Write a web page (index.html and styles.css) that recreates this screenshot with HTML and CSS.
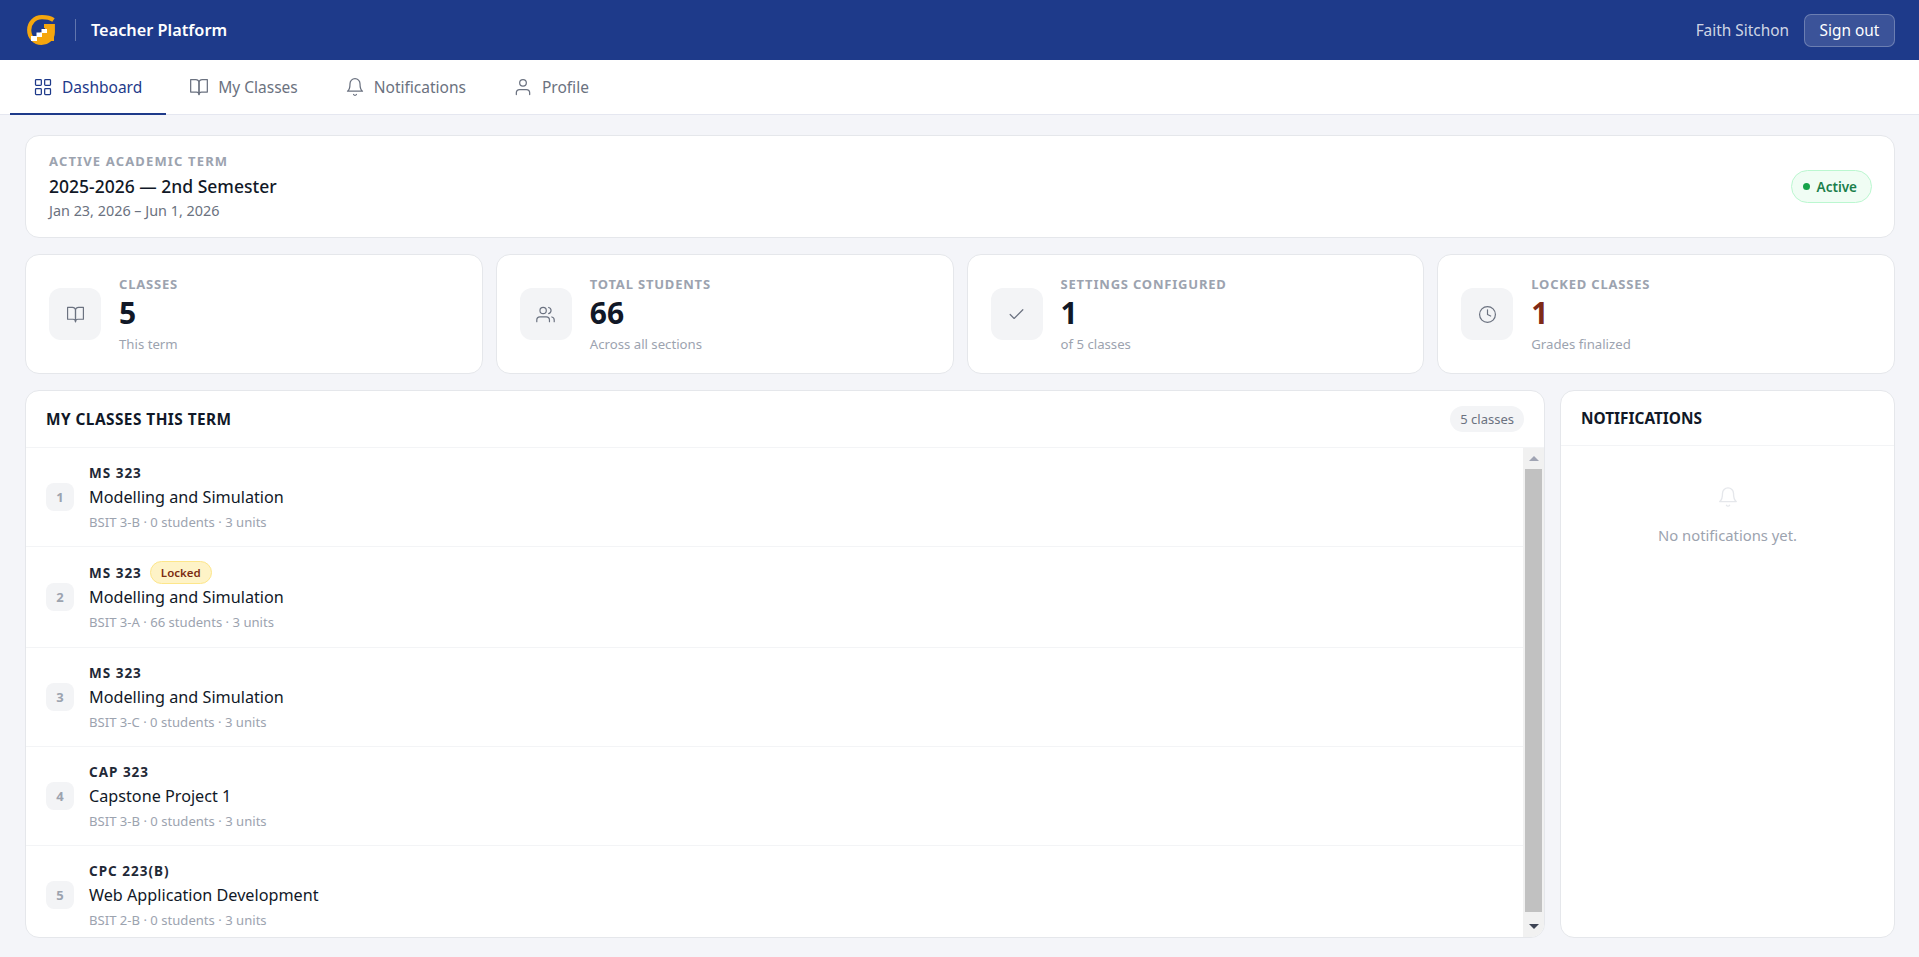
FILE: index.html
```html
<!DOCTYPE html>
<html lang="en">
<head>
  <meta charset="UTF-8">
  <meta name="viewport" content="width=device-width, initial-scale=1.0">
  <title>Teacher Platform</title>
  <link rel="stylesheet" href="styles.css">
</head>
<body>
  <header class="topbar">
    <div class="brand">
      <svg class="logo" viewBox="0 0 28 30" aria-hidden="true">
        <path d="M26.5 5C23.5 3 19.5 2.2 15 2.2C7.5 2.2 2.2 8 2.2 15C2.2 22.6 7.6 27.8 14.4 27.8C21 27.8 25.8 23.5 25.8 17V11H17" fill="none" stroke="#f5a60e" stroke-width="4.2"/>
        <path d="M8 26V21H13V17.5H18V13H27V26z" fill="#f5a60e"/>
        <path d="M4 26V21H9.5V17.5H14.5V14H20V18H15V22H10V26z" fill="#fff"/>
      </svg>
      <span class="brand-divider"></span>
      <span class="brand-name">Teacher Platform</span>
    </div>
    <div class="user-area">
      <span class="user-name">Faith Sitchon</span>
      <button class="signout">Sign out</button>
    </div>
  </header>

  <nav class="tabs">
    <a class="tab active">
      <svg class="icon" viewBox="0 0 24 24"><rect x="3" y="3" width="7" height="7" rx="1"/><rect x="14" y="3" width="7" height="7" rx="1"/><rect x="14" y="14" width="7" height="7" rx="1"/><rect x="3" y="14" width="7" height="7" rx="1"/></svg>
      Dashboard
    </a>
    <a class="tab">
      <svg class="icon" viewBox="0 0 24 24"><path d="M2 3h6a4 4 0 0 1 4 4v14a3 3 0 0 0-3-3H2z"/><path d="M22 3h-6a4 4 0 0 0-4 4v14a3 3 0 0 1 3-3h7z"/></svg>
      My Classes
    </a>
    <a class="tab">
      <svg class="icon" viewBox="0 0 24 24"><path d="M18 8A6 6 0 0 0 6 8c0 7-3 9-3 9h18s-3-2-3-9"/><path d="M13.73 21a2 2 0 0 1-3.46 0"/></svg>
      Notifications
    </a>
    <a class="tab">
      <svg class="icon" viewBox="0 0 24 24"><path d="M20 21v-2a4 4 0 0 0-4-4H8a4 4 0 0 0-4 4v2"/><circle cx="12" cy="7" r="4"/></svg>
      Profile
    </a>
  </nav>

  <main class="content">
    <section class="card term-card">
      <div>
        <div class="term-label">Active Academic Term</div>
        <div class="term-title">2025-2026 — 2nd Semester</div>
        <div class="term-dates">Jan 23, 2026 – Jun 1, 2026</div>
      </div>
      <span class="status-pill"><span class="status-dot"></span>Active</span>
    </section>

    <section class="stats">
      <div class="card stat">
        <div class="stat-icon">
          <svg class="icon" viewBox="0 0 24 24"><path d="M2 3h6a4 4 0 0 1 4 4v14a3 3 0 0 0-3-3H2z"/><path d="M22 3h-6a4 4 0 0 0-4 4v14a3 3 0 0 1 3-3h7z"/></svg>
        </div>
        <div>
          <div class="stat-label">Classes</div>
          <div class="stat-value">5</div>
          <div class="stat-sub">This term</div>
        </div>
      </div>
      <div class="card stat">
        <div class="stat-icon">
          <svg class="icon" viewBox="0 0 24 24"><path d="M17 21v-2a4 4 0 0 0-4-4H5a4 4 0 0 0-4 4v2"/><circle cx="9" cy="7" r="4"/><path d="M23 21v-2a4 4 0 0 0-3-3.87"/><path d="M16 3.13a4 4 0 0 1 0 7.75"/></svg>
        </div>
        <div>
          <div class="stat-label">Total Students</div>
          <div class="stat-value">66</div>
          <div class="stat-sub">Across all sections</div>
        </div>
      </div>
      <div class="card stat">
        <div class="stat-icon">
          <svg class="icon" viewBox="0 0 24 24"><polyline points="20 6 9 17 4 12"/></svg>
        </div>
        <div>
          <div class="stat-label">Settings Configured</div>
          <div class="stat-value">1</div>
          <div class="stat-sub">of 5 classes</div>
        </div>
      </div>
      <div class="card stat">
        <div class="stat-icon">
          <svg class="icon" viewBox="0 0 24 24"><circle cx="12" cy="12" r="10"/><polyline points="12 6 12 12 16 14"/></svg>
        </div>
        <div>
          <div class="stat-label">Locked Classes</div>
          <div class="stat-value locked">1</div>
          <div class="stat-sub">Grades finalized</div>
        </div>
      </div>
    </section>

    <section class="panels">
      <div class="card panel">
        <div class="panel-head classes-head">
          <h2>My Classes This Term</h2>
          <span class="count-pill">5 classes</span>
        </div>
        <div class="list-wrap">
          <div class="class-list">
            <div class="class-row">
              <span class="row-num">1</span>
              <div>
                <div class="class-code">MS 323</div>
                <div class="class-name">Modelling and Simulation</div>
                <div class="class-meta">BSIT 3-B · 0 students · 3 units</div>
              </div>
            </div>
            <div class="class-row tall">
              <span class="row-num">2</span>
              <div>
                <div class="class-code">MS 323 <span class="locked-pill">Locked</span></div>
                <div class="class-name">Modelling and Simulation</div>
                <div class="class-meta">BSIT 3-A · 66 students · 3 units</div>
              </div>
            </div>
            <div class="class-row">
              <span class="row-num">3</span>
              <div>
                <div class="class-code">MS 323</div>
                <div class="class-name">Modelling and Simulation</div>
                <div class="class-meta">BSIT 3-C · 0 students · 3 units</div>
              </div>
            </div>
            <div class="class-row">
              <span class="row-num">4</span>
              <div>
                <div class="class-code">CAP 323</div>
                <div class="class-name">Capstone Project 1</div>
                <div class="class-meta">BSIT 3-B · 0 students · 3 units</div>
              </div>
            </div>
            <div class="class-row">
              <span class="row-num">5</span>
              <div>
                <div class="class-code">CPC 223(B)</div>
                <div class="class-name">Web Application Development</div>
                <div class="class-meta">BSIT 2-B · 0 students · 3 units</div>
              </div>
            </div>
          </div>
          <div class="scrollbar">
            <span class="scroll-btn"><span class="arrow-up"></span></span>
            <span class="scroll-thumb"></span>
            <span class="scroll-btn"><span class="arrow-down"></span></span>
          </div>
        </div>
      </div>

      <div class="card panel">
        <div class="panel-head notif-head">
          <h2>Notifications</h2>
        </div>
        <div class="empty">
          <svg class="icon empty-bell" viewBox="0 0 24 24"><path d="M18 8A6 6 0 0 0 6 8c0 7-3 9-3 9h18s-3-2-3-9"/><path d="M13.73 21a2 2 0 0 1-3.46 0"/></svg>
          <p>No notifications yet.</p>
        </div>
      </div>
    </section>
  </main>
</body>
</html>
```

FILE: styles.css
```css
* {
  box-sizing: border-box;
}

html, body {
  height: 100%;
}

body {
  margin: 0;
  height: 957px;
  display: flex;
  flex-direction: column;
  overflow: hidden;
  font-family: "Noto Sans", "Open Sans", sans-serif;
  background-color: #f4f5f9;
  color: #111827;
}

.icon {
  width: 19px;
  height: 19px;
  flex: none;
  fill: none;
  stroke: currentColor;
  stroke-width: 1.5;
  stroke-linecap: round;
  stroke-linejoin: round;
}

/* top bar */
.topbar {
  height: 60px;
  flex: none;
  display: flex;
  align-items: center;
  justify-content: space-between;
  padding: 0 24px 0 27px;
  background-color: #1e3a8a;
}

.brand {
  display: flex;
  align-items: center;
}

.logo {
  width: 28px;
  height: 30px;
}

.brand-divider {
  width: 1px;
  height: 22px;
  margin: 0 15px 0 20px;
  background-color: rgba(255, 255, 255, 0.3);
}

.brand-name {
  font-size: 16.3px;
  font-weight: 600;
  color: #fff;
}

.user-area {
  display: flex;
  align-items: center;
  gap: 15px;
}

.user-name {
  font-size: 15.4px;
  color: rgba(255, 255, 255, 0.8);
}

.signout {
  width: 91px;
  height: 33px;
  padding: 0;
  font-family: inherit;
  font-size: 15.4px;
  color: #fff;
  background-color: rgba(255, 255, 255, 0.13);
  border: 1px solid rgba(255, 255, 255, 0.25);
  border-radius: 7px;
}

/* tabs */
.tabs {
  height: 55px;
  flex: none;
  display: flex;
  padding-left: 10px;
  background-color: #fff;
  border-bottom: 1px solid #e5e7f0;
}

.tab {
  display: flex;
  align-items: center;
  gap: 9px;
  height: 55px;
  padding: 0 24px 0 23px;
  font-size: 15.5px;
  color: #6b7280;
  border-bottom: 2px solid transparent;
}

.tab .icon {
  width: 20px;
  height: 20px;
}

.tab.active {
  color: #1e3a8a;
  border-bottom-color: #1e3a8a;
}

/* page */
.content {
  flex: 1;
  min-height: 0;
  display: flex;
  flex-direction: column;
  gap: 16px;
  padding: 20px 24px 19px 25px;
}

.card {
  background-color: #fff;
  border: 1px solid #e5e7eb;
  border-radius: 14px;
}

.term-card {
  height: 103px;
  flex: none;
  display: flex;
  align-items: center;
  justify-content: space-between;
  padding: 0 22px 0 23px;
}

.term-label,
.stat-label {
  font-size: 13px;
  font-weight: 700;
  line-height: 17px;
  letter-spacing: 0.8px;
  text-transform: uppercase;
  color: #9ca3af;
}

.term-label {
  letter-spacing: 1.15px;
}

.term-title {
  margin-top: 4px;
  font-size: 17.5px;
  font-weight: 500;
  line-height: 24px;
}

.term-dates {
  margin-top: 3px;
  font-size: 14.4px;
  line-height: 20px;
  color: #6b7280;
}

.status-pill {
  display: flex;
  align-items: center;
  gap: 7px;
  height: 33px;
  padding: 0 14px 0 11px;
  font-size: 13.5px;
  font-weight: 600;
  color: #1a7f4b;
  background-color: #f0fdf4;
  border: 1px solid #bbf7d0;
  border-radius: 17px;
}

.status-dot {
  width: 7px;
  height: 7px;
  border-radius: 50%;
  background-color: #16a34a;
}

/* stat cards */
.stats {
  flex: none;
  display: grid;
  grid-template-columns: repeat(4, 1fr);
  gap: 13px;
}

.stat {
  height: 120px;
  display: flex;
  align-items: center;
  gap: 18px;
  padding: 0 23px;
}

.stat-icon {
  width: 52px;
  height: 52px;
  flex: none;
  display: flex;
  align-items: center;
  justify-content: center;
  color: #6b7280;
  background-color: #f3f4f6;
  border-radius: 12px;
}

.stat-label {
  margin-bottom: 1px;
}

.stat-value {
  font-size: 30px;
  font-weight: 700;
  line-height: 38px;
}

.stat-value.locked {
  color: #7f2a17;
}

.stat-sub {
  margin-top: 3px;
  font-size: 13.2px;
  line-height: 18px;
  color: #9ca3af;
}

/* bottom panels */
.panels {
  flex: 1;
  min-height: 0;
  display: grid;
  grid-template-columns: 1fr 335px;
  gap: 15px;
}

.panel {
  display: flex;
  flex-direction: column;
  min-height: 0;
  overflow: hidden;
}

.panel-head {
  flex: none;
  display: flex;
  align-items: center;
  justify-content: space-between;
  padding: 0 20px;
  border-bottom: 1px solid #f3f4f6;
}

.classes-head {
  height: 57px;
}

.notif-head {
  height: 55px;
}

.panel-head h2 {
  margin: 0;
  font-size: 15.4px;
  font-weight: 700;
  text-transform: uppercase;
}

.classes-head h2 {
  letter-spacing: 0.45px;
}

.count-pill {
  height: 26px;
  padding: 0 10px;
  font-size: 13px;
  line-height: 26px;
  color: #6b7280;
  background-color: #f3f4f6;
  border-radius: 13px;
}

.list-wrap {
  flex: 1;
  min-height: 0;
  display: flex;
}

.class-list {
  flex: 1;
  min-width: 0;
  overflow: hidden;
}

/* the list's classic scrollbar, drawn since the page itself never overflows */
.scrollbar {
  width: 21px;
  flex: none;
  display: flex;
  flex-direction: column;
  background-color: #f1f1f1;
}

.scroll-btn {
  height: 21px;
  flex: none;
  display: flex;
  align-items: center;
  justify-content: center;
}

.scroll-thumb {
  height: 443px;
  margin: 0 2px;
  background-color: #c1c1c1;
}

.scroll-btn:last-child {
  margin-top: auto;
}

.arrow-up {
  border-left: 5px solid transparent;
  border-right: 5px solid transparent;
  border-bottom: 5px solid #a0a4b3;
}

.arrow-down {
  border-left: 5px solid transparent;
  border-right: 5px solid transparent;
  border-top: 5px solid #3d4454;
}

.class-row {
  display: flex;
  align-items: center;
  gap: 15px;
  height: 99px;
  padding: 0 20px;
  border-bottom: 1px solid #f3f4f6;
}

.class-row.tall {
  height: 101px;
}

.row-num {
  width: 28px;
  height: 28px;
  flex: none;
  display: flex;
  align-items: center;
  justify-content: center;
  font-size: 13px;
  font-weight: 700;
  color: #9ca3af;
  background-color: #f3f4f6;
  border-radius: 8px;
}

.class-code {
  display: flex;
  align-items: center;
  gap: 8px;
  font-size: 13.5px;
  font-weight: 700;
  line-height: 18px;
  letter-spacing: 1px;
  color: #1f2937;
}

.locked-pill {
  height: 23px;
  padding: 0 10px;
  margin: -3px 0 -2px;
  font-size: 11.5px;
  font-weight: 600;
  line-height: 21px;
  letter-spacing: 0;
  color: #7c2d12;
  background-color: #fef3c7;
  border: 1px solid #fde68a;
  border-radius: 12px;
}

.class-name {
  margin-top: 4px;
  font-size: 16.2px;
  line-height: 22px;
}

.class-meta {
  margin-top: 5px;
  font-size: 13.1px;
  line-height: 18px;
  color: #9ca3af;
}

/* notifications empty state */
.empty {
  display: flex;
  flex-direction: column;
  align-items: center;
  padding-top: 40px;
}

.empty-bell {
  width: 22px;
  height: 22px;
  color: #e5e7eb;
}

.empty p {
  margin: 17px 0 0;
  font-size: 14.8px;
  color: #9ca3af;
}
```
